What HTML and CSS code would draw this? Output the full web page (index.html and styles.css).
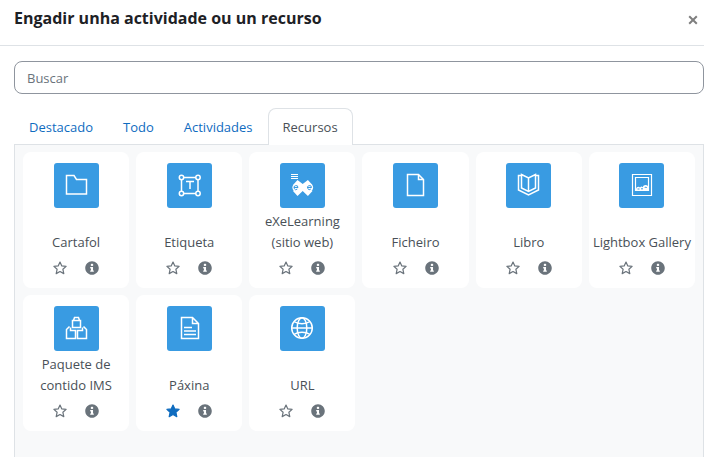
FILE: index.html
```html
<!DOCTYPE html>
<html lang="gl">

<head>
    <meta charset="UTF-8">
    <meta name="viewport" content="width=device-width, initial-scale=1.0">
    <title>Engadir unha actividade ou un recurso</title>
    <link rel="stylesheet" href="styles.css">
</head>

<body>
    <svg class="sprite" aria-hidden="true">
        <symbol id="star" viewBox="0 0 14 14">
            <path d="M7 1l1.800 3.900 4.300.5-3.200 2.900.9 4.300L7 10.500l-3.800 2.100.9-4.300L.9 5.400l4.300-.5z" stroke="currentColor" stroke-width="1.200" stroke-linejoin="round" />
        </symbol>
        <symbol id="info" viewBox="0 0 512 512">
            <path fill="currentColor" d="M256 8C119 8 8 119 8 256s111 248 248 248 248-111 248-248S393 8 256 8zm0 90c26 0 46 20 46 44s-20 44-46 44-46-20-46-44 20-44 46-44zm66 286c0 7-5 12-12 12H202c-7 0-12-5-12-12v-28c0-7 5-12 12-12h16v-72h-16c-7 0-12-5-12-12v-28c0-7 5-12 12-12h80c7 0 12 5 12 12v112h16c7 0 12 5 12 12z" />
        </symbol>
    </svg>

    <header class="modal_header">
        <h1 class="title">Engadir unha actividade ou un recurso</h1>
        <button class="close" type="button" aria-label="Pechar">
            <svg viewBox="0 0 10 10"><path d="M1.200 1.200l7.600 7.600M8.800 1.200L1.200 8.800" /></svg>
        </button>
    </header>

    <main class="modal_body">
        <input class="search" type="search" placeholder="Buscar" aria-label="Buscar">

        <nav class="tabs">
            <a class="tab" href="#destacado">Destacado</a>
            <a class="tab" href="#todo">Todo</a>
            <a class="tab" href="#actividades">Actividades</a>
            <a class="tab active" href="#recursos" aria-current="true">Recursos</a>
        </nav>

        <section class="panel" id="recursos">
            <div class="options">
                <div class="option">
                    <a class="option_link" href="#cartafol">
                        <svg class="icon" viewBox="0 0 45 45">
                            <path d="M12.500 12.500h7.500l2.500 4h10v14.500h-20z" />
                        </svg>
                        <span class="name">Cartafol</span>
                    </a>
                    <div class="actions">
                        <button class="action" type="button" aria-label="Destacar Cartafol"><svg><use href="#star" /></svg></button>
                        <button class="action" type="button" aria-label="Información de Cartafol"><svg><use href="#info" /></svg></button>
                    </div>
                </div>
                <div class="option">
                    <a class="option_link" href="#etiqueta">
                        <svg class="icon" viewBox="0 0 45 45">
                            <path d="M17 14.500h12M17 30.500h12M14.500 17v11M31 17v11" />
                            <circle cx="14.500" cy="14.500" r="2.200" />
                            <circle cx="31" cy="14.500" r="2.200" />
                            <circle cx="14.500" cy="30.500" r="2.200" />
                            <circle cx="31" cy="30.500" r="2.200" />
                            <path d="M19 18.500h8M23 18.500v7.500" />
                        </svg>
                        <span class="name">Etiqueta</span>
                    </a>
                    <div class="actions">
                        <button class="action" type="button" aria-label="Destacar Etiqueta"><svg><use href="#star" /></svg></button>
                        <button class="action" type="button" aria-label="Información de Etiqueta"><svg><use href="#info" /></svg></button>
                    </div>
                </div>
                <div class="option">
                    <a class="option_link" href="#exelearning">
                        <svg class="icon" viewBox="0 0 45 45">
                            <path d="M11 11.500h7M11 13.500h7M11 15.500h7" stroke-width="1.200" />
                            <path class="solid" d="M17.500 17l5.200 4 5.200-4 4.600 5-3.500 3 3.500 3-4.600 5-5.200-5-5.200 5-4.500-5 3-3-3-3z" />
                            <circle class="solid" cx="16" cy="24.500" r="3.600" />
                            <circle class="solid" cx="29.500" cy="24.500" r="3.600" />
                            <path class="cut" d="M14 24.500h4a2 2 0 1 0-.7 1.600M27.500 24.500h4a2 2 0 1 0-.7 1.600" />
                        </svg>
                        <span class="name">eXeLearning (sitio web)</span>
                    </a>
                    <div class="actions">
                        <button class="action" type="button" aria-label="Destacar eXeLearning"><svg><use href="#star" /></svg></button>
                        <button class="action" type="button" aria-label="Información de eXeLearning"><svg><use href="#info" /></svg></button>
                    </div>
                </div>
                <div class="option">
                    <a class="option_link" href="#ficheiro">
                        <svg class="icon" viewBox="0 0 45 45">
                            <path d="M14.500 11.500h11l5 5v16h-16zM25.500 11.500v5h5" />
                        </svg>
                        <span class="name">Ficheiro</span>
                    </a>
                    <div class="actions">
                        <button class="action" type="button" aria-label="Destacar Ficheiro"><svg><use href="#star" /></svg></button>
                        <button class="action" type="button" aria-label="Información de Ficheiro"><svg><use href="#info" /></svg></button>
                    </div>
                </div>
                <div class="option">
                    <a class="option_link" href="#libro">
                        <svg class="icon" viewBox="0 0 45 45">
                            <path d="M15.500 12.500h-3v14.500l10 5 10-5V12.500h-3" />
                            <path d="M15.500 11.500l7 3.500 7-3.500v13.500l-7 3.500-7-3.500zM22.500 15v13" />
                        </svg>
                        <span class="name">Libro</span>
                    </a>
                    <div class="actions">
                        <button class="action" type="button" aria-label="Destacar Libro"><svg><use href="#star" /></svg></button>
                        <button class="action" type="button" aria-label="Información de Libro"><svg><use href="#info" /></svg></button>
                    </div>
                </div>
                <div class="option">
                    <a class="option_link" href="#lightbox">
                        <svg class="icon" viewBox="0 0 45 45">
                            <path d="M13.500 11.500h19v21h-19zM16.500 14.500h13v13h-13z" stroke-width="1.200" />
                            <path class="solid" d="M17 27.500v-1.500c.5-2 2.500-3 4-1.500 1-1.200 2-1.200 2.800-.3.500-2.700 3.700-2.700 5.200-1.200v4.500z" />
                            <path class="cut" d="M18.500 26h2M22 25.800h2M25.500 25c.5-1 2-1 2.500 0" />
                        </svg>
                        <span class="name">Lightbox Gallery</span>
                    </a>
                    <div class="actions">
                        <button class="action" type="button" aria-label="Destacar Lightbox Gallery"><svg><use href="#star" /></svg></button>
                        <button class="action" type="button" aria-label="Información de Lightbox Gallery"><svg><use href="#info" /></svg></button>
                    </div>
                </div>
                <div class="option">
                    <a class="option_link" href="#ims">
                        <svg class="icon" viewBox="0 0 45 45">
                            <path d="M19.500 14.500l1-3h4l1 3M18.500 14.500h8v7h-8z" />
                            <path d="M15.500 20.500l-3 3v9h9v-8h-5v-3M29.500 20.500l3 3v9h-9v-8h5v-3" />
                        </svg>
                        <span class="name">Paquete de contido IMS</span>
                    </a>
                    <div class="actions">
                        <button class="action" type="button" aria-label="Destacar Paquete de contido IMS"><svg><use href="#star" /></svg></button>
                        <button class="action" type="button" aria-label="Información de Paquete de contido IMS"><svg><use href="#info" /></svg></button>
                    </div>
                </div>
                <div class="option">
                    <a class="option_link" href="#paxina">
                        <svg class="icon" viewBox="0 0 45 45">
                            <path d="M14.500 11.500h11l6 6v15h-17zM25.500 11.500v6h6" />
                            <path d="M17 21.500h8M17 25h12M17 28.500h12" />
                        </svg>
                        <span class="name">Páxina</span>
                    </a>
                    <div class="actions">
                        <button class="action starred" type="button" aria-pressed="true" aria-label="Destacar Páxina"><svg><use href="#star" /></svg></button>
                        <button class="action" type="button" aria-label="Información de Páxina"><svg><use href="#info" /></svg></button>
                    </div>
                </div>
                <div class="option">
                    <a class="option_link" href="#url">
                        <svg class="icon" viewBox="0 0 45 45">
                            <circle cx="22" cy="22" r="10.300" />
                            <ellipse cx="22" cy="22" rx="4.800" ry="10.300" />
                            <path d="M11.700 22h20.600M14 15.500c4 3 12 3 16 0M14 28.500c4-3 12-3 16 0" />
                        </svg>
                        <span class="name">URL</span>
                    </a>
                    <div class="actions">
                        <button class="action" type="button" aria-label="Destacar URL"><svg><use href="#star" /></svg></button>
                        <button class="action" type="button" aria-label="Información de URL"><svg><use href="#info" /></svg></button>
                    </div>
                </div>
            </div>
        </section>
    </main>
</body>

</html>
```
FILE: styles.css
```css
* {
    box-sizing: border-box;
}

body {
    display: flex;
    flex-direction: column;
    min-height: 100vh;
    margin: 0;
    background-color: #fff;
    color: #495057;
    font-family: "Segoe UI", "Open Sans", "Noto Sans", sans-serif;
    font-size: 13px;
    line-height: 21px;
}

a {
    color: #0f6cbf;
    text-decoration: none;
}

button {
    display: flex;
    align-items: center;
    justify-content: center;
    padding: 0;
    border: 0;
    background: none;
    cursor: pointer;
}

.sprite {
    position: absolute;
    width: 0;
    height: 0;
}

.modal_header {
    display: flex;
    justify-content: space-between;
    align-items: center;
    padding: 6px 4px 15px 14px;
    border-bottom: 1px solid #dee2e6;
}

.modal_header .title {
    margin: 0;
    color: #1d2125;
    font-size: 16px;
    font-weight: 700;
    line-height: 24px;
}

.modal_header .close {
    width: 14px;
    height: 20px;
    margin-top: 4px;
}

.close svg {
    width: 10px;
    height: 10px;
    stroke: #7f7f7f;
    stroke-width: 2;
}

.modal_body {
    display: flex;
    flex-direction: column;
    flex: 1;
    padding: 15px 0 0 14px;
}

.search {
    width: 100%;
    height: 33px;
    padding: 0 12px;
    border: 1px solid #8f959e;
    border-radius: 8px;
    background-color: #fff;
    color: #495057;
    font: inherit;
    appearance: none;
}

.search::placeholder {
    color: #6a737b;
    opacity: 1;
}

.tabs {
    display: flex;
    margin-top: 14px;
}

.tab {
    height: 37px;
    margin-bottom: -1px;
    padding: 8px 14px;
    border: 1px solid transparent;
    border-bottom: 0;
    border-radius: 8px 8px 0 0;
}

.tab.active {
    z-index: 1;
    border-color: #dee2e6;
    background-color: #fff;
    color: #495057;
}

.panel {
    flex: 1;
    padding: 7px 8px;
    border: 1px solid #dee2e6;
    border-bottom: 0;
    background-color: #f8f9fa;
}

.options {
    display: grid;
    grid-template-columns: repeat(auto-fill, minmax(100px, 1fr));
    gap: 7px;
}

.option {
    padding: 11px 0 5px;
    border-radius: 8px;
    background-color: #fff;
}

.option_link {
    display: flex;
    flex-direction: column;
    align-items: center;
    gap: 3px;
    color: #495057;
}

.icon {
    width: 45px;
    height: 45px;
    border-radius: 3px;
    background-color: #399be2;
    fill: none;
    stroke: #fff;
    stroke-width: 1.5;
}

.icon .solid {
    fill: #fff;
    stroke: none;
}

.icon .cut {
    stroke: #399be2;
    stroke-width: 1;
}

.name {
    display: flex;
    align-items: flex-end;
    justify-content: center;
    max-width: 100px;
    height: 42px;
    text-align: center;
}

.actions {
    display: flex;
    justify-content: center;
}

.action {
    width: 32px;
    height: 30px;
    color: #6a737b;
}

.action svg {
    width: 14px;
    height: 14px;
    fill: none;
}

.action.starred {
    color: #0f6cbf;
}

.action.starred svg {
    fill: currentColor;
}
```
